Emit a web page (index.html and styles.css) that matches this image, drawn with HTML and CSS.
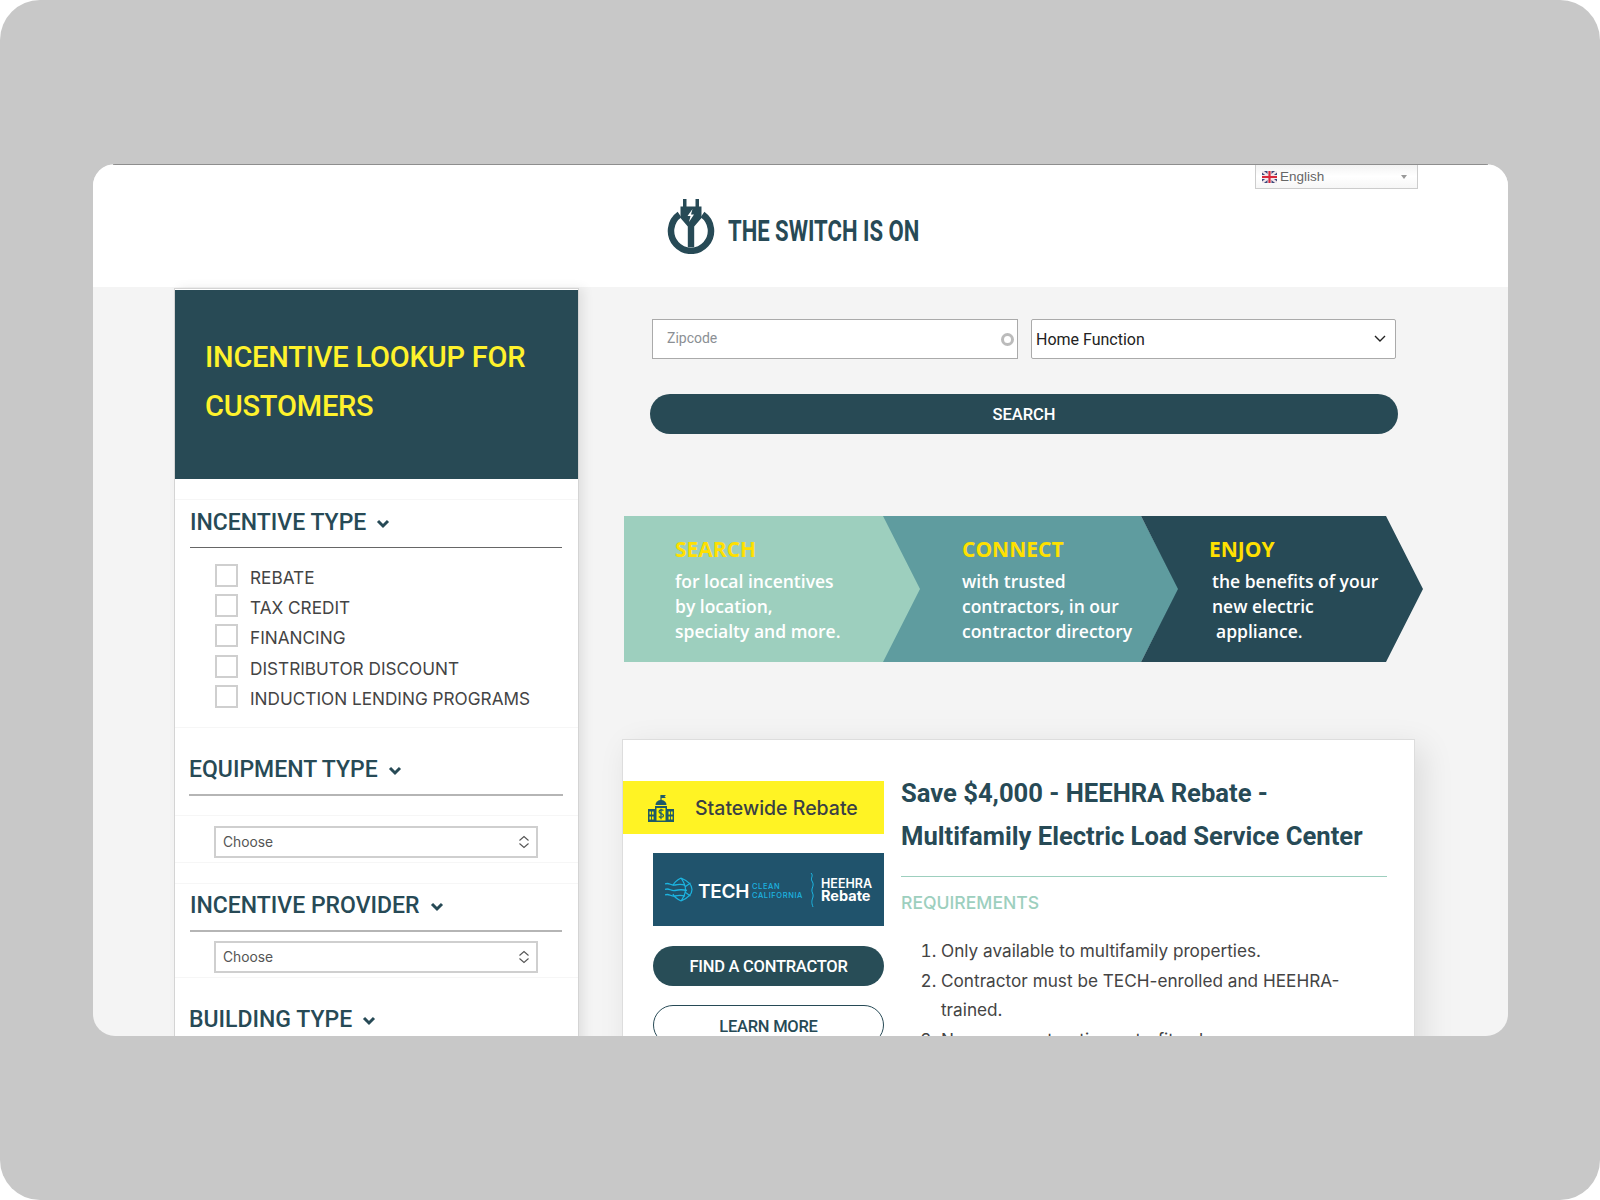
FILE: index.html
```html
<!DOCTYPE html>
<html lang="en">
<head>
<meta charset="utf-8">
<title>The Switch Is On</title>
<link rel="stylesheet" href="styles.css">
</head>
<body>
<div class="stage">
  <div class="window">
    <div class="topline"></div>
    <header class="header">
      <div class="logo">
        <svg class="logo-icon" width="48" height="56" viewBox="0 0 48 56">
          <path d="M12.5 16.5 A20 20 0 1 0 35.5 16.5" fill="none" stroke="#274a56" stroke-width="6.5"/>
          <path d="M16 1h3.5v8H16zM28.5 1H32v8h-3.5zM13.500 8.500h21V20l-7.300 8.500V49h-6.400V28.500L13.500 20z" fill="#274a56"/>
          <path d="M25.500 11l-5 7h3l-1.500 6 5-7.500h-3z" fill="#fff"/>
        </svg>
        <span class="logo-text">THE SWITCH IS ON</span>
      </div>
      <div class="lang">
        <svg class="flag" width="15" height="12" viewBox="0 0 15 12">
          <rect width="15" height="12" rx="2" fill="#3d4a7c"/>
          <path d="M0 0l15 12M15 0L0 12" stroke="#f2e6ea" stroke-width="2.400"/>
          <path d="M7.500 0v12M0 6h15" stroke="#f2e6ea" stroke-width="4"/>
          <path d="M7.500 0v12M0 6h15" stroke="#d8283c" stroke-width="2.200"/>
        </svg>
        <span class="lang-name">English</span>
        <span class="lang-caret"></span>
      </div>
    </header>
    <main class="main">
      <aside class="sidebar">
        <div class="panel"><h1 class="panel-title">INCENTIVE LOOKUP FOR CUSTOMERS</h1></div>

        <section class="group group-first">
          <h2 class="group-title">INCENTIVE TYPE
            <svg class="chev" width="14" height="10" viewBox="0 0 14 10"><path d="M2 2l5 5 5-5" fill="none" stroke="#274a56" stroke-width="3"/></svg>
          </h2>
          <div class="rule rule-dark"></div>
          <ul class="checks">
            <li class="check"><span class="box"></span>REBATE</li>
            <li class="check"><span class="box"></span>TAX CREDIT</li>
            <li class="check"><span class="box"></span>FINANCING</li>
            <li class="check"><span class="box"></span>DISTRIBUTOR DISCOUNT</li>
            <li class="check"><span class="box"></span>INDUCTION LENDING PROGRAMS</li>
          </ul>
        </section>

        <section class="group group-equip">
          <h2 class="group-title shift">EQUIPMENT TYPE
            <svg class="chev" width="14" height="10" viewBox="0 0 14 10"><path d="M2 2l5 5 5-5" fill="none" stroke="#274a56" stroke-width="3"/></svg>
          </h2>
          <div class="rule rule-wide"></div>
        </section>
        <section class="group group-select">
          <div class="choose"><span>Choose</span>
            <svg width="12" height="16" viewBox="0 0 12 16"><path d="M1.500 6.500L6 2.500l4.500 4M1.500 9.500L6 13.500l4.500-4" fill="none" stroke="#555" stroke-width="1.100"/></svg>
          </div>
        </section>

        <section class="group group-provider">
          <h2 class="group-title">INCENTIVE PROVIDER
            <svg class="chev" width="14" height="10" viewBox="0 0 14 10"><path d="M2 2l5 5 5-5" fill="none" stroke="#274a56" stroke-width="3"/></svg>
          </h2>
          <div class="rule rule-mid"></div>
          <div class="choose choose-tight"><span>Choose</span>
            <svg width="12" height="16" viewBox="0 0 12 16"><path d="M1.500 6.500L6 2.500l4.500 4M1.500 9.500L6 13.500l4.500-4" fill="none" stroke="#555" stroke-width="1.100"/></svg>
          </div>
        </section>

        <section class="group group-building">
          <h2 class="group-title shift">BUILDING TYPE
            <svg class="chev" width="14" height="10" viewBox="0 0 14 10"><path d="M2 2l5 5 5-5" fill="none" stroke="#274a56" stroke-width="3"/></svg>
          </h2>
        </section>
      </aside>

      <div class="content">
        <div class="search-row">
          <div class="zip"><span class="zip-text">Zipcode</span><span class="zip-ring"></span></div>
          <div class="func"><span>Home Function</span>
            <svg width="14" height="10" viewBox="0 0 14 10"><path d="M2 2l5 5 5-5" fill="none" stroke="#222" stroke-width="1.400"/></svg>
          </div>
        </div>
        <div class="search-btn">SEARCH</div>

        <div class="steps">
          <div class="step step-1">
            <div class="step-head">SEARCH</div>
            <div class="step-line">for local incentives</div>
            <div class="step-line">by location,</div>
            <div class="step-line">specialty and more.</div>
          </div>
          <div class="step step-2">
            <div class="step-head">CONNECT</div>
            <div class="step-line">with trusted</div>
            <div class="step-line">contractors, in our</div>
            <div class="step-line">contractor directory</div>
          </div>
          <div class="step step-3">
            <div class="step-head">ENJOY</div>
            <div class="step-line nudge">the benefits of your</div>
            <div class="step-line nudge">new electric</div>
            <div class="step-line nudge-more">appliance.</div>
          </div>
        </div>

        <article class="card">
          <div class="card-left">
            <div class="tag">
              <svg class="tag-icon" width="26" height="28" viewBox="0 0 26 28">
                <path d="M13 1v6" stroke="#1f5a68" stroke-width="1.200"/>
                <path d="M13 1h5l-1.500 1.500L18 4h-5z" fill="#1f5a68"/>
                <path d="M7.500 11a5.500 5 0 0 1 11 0z" fill="#1f5a68"/>
                <path d="M0 15h7v13H0zM19 15h7v13h-7zM7 12h12v16H7z" fill="#1f5a68"/>
                <path d="M1.500 17.500h1.600v3H1.500zM4 17.500h1.600v3H4zM1.500 22.500h1.600v3H1.500zM4 22.500h1.600v3H4zM20.500 17.500h1.600v3h-1.600zM23 17.500h1.600v3H23zM20.500 22.500h1.600v3h-1.600zM23 22.500h1.600v3H23z" fill="#fff200"/>
                <path d="M8.500 14h9v12.500h-9z" fill="#fff200"/>
                <path d="M15.500 16.500c-1-1-4.500-1-4.500 1.200 0 2.600 4.500 1.300 4.500 3.800 0 2.200-3.500 2.200-4.700 1M13 14.800v10.400" fill="none" stroke="#1f5a68" stroke-width="1.200"/>
              </svg>
              <span class="tag-text">Statewide Rebate</span>
            </div>
            <div class="tech">
              <svg class="leaf" width="28" height="25" viewBox="0 0 28 25">
                <path d="M16 1C23 4 27 8 27 12.500S23 21 16 24M16 1C12 3 9 5.500 8 8.500M16 24C12 22 9 20 8 17M16 1C19.500 6 20.500 9 20.500 12.500S19.500 19 16 24M20.500 9.500l5-3.500M20.500 15.500l5 3.500" fill="none" stroke="#1cb4e0" stroke-width="1.200"/>
                <path d="M0 7c4-2 6 2 10 1s6-1 10 0M0 12.500c4-2 6 2 10 1s8-1 12 0M0 18c4-2 6 2 10 1s6-1 10 0" fill="none" stroke="#1cb4e0" stroke-width="1.300"/>
              </svg>
              <span class="tech-name">TECH</span>
              <span class="tech-sub"><span class="tech-sub-line">CLEAN</span><span class="tech-sub-line">CALIFORNIA</span></span>
              <svg class="wave" width="4" height="34" viewBox="0 0 4 34"><path d="M1 0c3 3-1 5 1 8s1 5 0 8 2 5 1 8-2 5 0 10" fill="none" stroke="#1cb4e0" stroke-width="1"/></svg>
              <span class="heehra"><span class="heehra-top">HEEHRA</span><span class="heehra-bot">Rebate</span></span>
            </div>
            <div class="pill pill-dark">FIND A CONTRACTOR</div>
            <div class="pill pill-light">LEARN MORE</div>
          </div>
          <div class="card-right">
            <h3 class="card-title">Save $4,000 - HEEHRA Rebate - Multifamily Electric Load Service Center</h3>
            <div class="card-rule"></div>
            <h4 class="req">REQUIREMENTS</h4>
            <ol class="req-list">
              <li>Only available to multifamily properties.</li>
              <li>Contractor must be TECH-enrolled and HEEHRA-trained.</li>
              <li>No new construction, retrofit only.</li>
            </ol>
          </div>
        </article>
      </div>
    </main>
  </div>
</div>
</body>
</html>
```
FILE: styles.css
```css
* { box-sizing: border-box; }
html, body { margin: 0; padding: 0; background: #fff; }
h1, h2, h3, h4, ul, ol { margin: 0; padding: 0; }

.stage {
  width: 1600px;
  height: 1200px;
  background: #c8c8c8;
  border-radius: 40px;
  padding: 164px 92px 164px 93px;
}
.window {
  width: 1415px;
  height: 872px;
  background: #f4f4f4;
  border-radius: 22px;
  overflow: hidden;
  display: flex;
  flex-direction: column;
}
.topline { height: 1px; background: #8e8e8e; margin: 0 20px; flex: none; }

.header {
  height: 122px;
  flex: none;
  background: #fff;
  display: flex;
  align-items: flex-start;
  padding-left: 574px;
  padding-right: 90px;
}
.logo { display: flex; align-items: center; margin-top: 33px; }
.logo-icon { display: block; }
.logo-text {
  display: inline-block;
  font-family: "Roboto", sans-serif;
  font-weight: 700;
  font-size: 30px;
  color: #274a56;
  margin-left: 13px;
  margin-top: 9px;
  transform: scaleX(.735);
  transform-origin: left center;
}
.lang {
  margin-left: auto;
  width: 163px;
  height: 24px;
  border: 1px solid #ccc;
  border-top: none;
  background: linear-gradient(#f3f3f3, #fff 50%, #f6f6f6);
  display: flex;
  align-items: center;
  padding: 0 0 0 6px;
}
.flag { flex: none; }
.lang-name {
  font-family: "Liberation Sans", sans-serif;
  font-size: 13.500px;
  color: #666;
  margin-left: 3px;
}
.lang-caret {
  margin-left: auto;
  margin-right: 10px;
  width: 0;
  height: 0;
  border-left: 3.500px solid transparent;
  border-right: 3.500px solid transparent;
  border-top: 4px solid #999;
}

.main { flex: 1; display: flex; align-items: flex-start; padding-left: 81px; min-height: 0; }

.sidebar {
  width: 405px;
  flex: none;
  margin-top: 1px;
  background: #fff;
  border: 1px solid #d4d4d4;
  box-shadow: 5px 0 10px rgba(0,0,0,.08);
  height: 800px;
}
.panel {
  height: 189px;
  margin-top: 1px;
  background: #284a55;
  padding: 43px 30px 0;
}
.panel-title {
  font-family: "Roboto", sans-serif;
  font-weight: 500;
  font-size: 29px;
  line-height: 49px;
  color: #fff22c;
  letter-spacing: -0.2px;
}

.group { border-top: 1px solid #f6f6f6; padding-left: 15px; padding-right: 16px; }
.group-first { margin-top: 20px; padding-top: 8px; padding-bottom: 19px; }
.group-equip { padding-top: 27px; padding-bottom: 19px; }
.group-select { padding-top: 10px; padding-bottom: 4px; border-bottom: 1px solid #f6f6f6; }
.group-provider { margin-top: 20px; padding-top: 7px; padding-bottom: 4px; border-bottom: 1px solid #f6f6f6; }
.group-building { border-top: none; padding-top: 27px; }

.group-title {
  font-family: "Roboto", sans-serif;
  font-weight: 500;
  font-size: 23px;
  line-height: 30px;
  color: #274a56;
  display: flex;
  align-items: center;
  gap: 10px;
}
.shift { margin-left: -1px; }
.chev { flex: none; margin-top: 2px; }

.rule { height: 1px; background: #666; margin-top: 9px; }
.rule-wide { height: 2px; background: #b5b5b5; margin: 9px -1px 0; }
.rule-mid { height: 2px; background: #b5b5b5; margin-top: 9px; }

.checks { list-style: none; margin-top: 16px; padding-left: 25px; }
.check {
  height: 30.200px;
  display: flex;
  align-items: flex-start;
  font-family: "Inter", sans-serif;
  font-size: 17.200px;
  line-height: 28px;
  color: #444;
}
.check:last-child { height: 23px; }
.box {
  width: 23px;
  height: 23px;
  flex: none;
  background: #fff;
  border: 2px solid #cfcfcf;
  margin-right: 12px;
}

.choose {
  width: 324px;
  height: 32px;
  margin-left: 24px;
  border: 2px solid #cfcfcf;
  background: #fff;
  display: flex;
  align-items: center;
  justify-content: space-between;
  padding: 0 6px 0 7px;
  font-family: "Inter", sans-serif;
  font-size: 13.800px;
  color: #555;
}
.choose-tight { margin-top: 9px; }

.content { flex: 1; display: flex; flex-direction: column; min-width: 0; }
.search-row { display: flex; gap: 13px; margin: 32px 0 0 73px; }
.zip, .func {
  height: 40px;
  border: 1px solid #aaa;
  background: #fff;
  display: flex;
  align-items: center;
  justify-content: space-between;
}
.zip { width: 366px; padding: 0 3px 0 14px; }
.func { width: 365px; padding: 0 8px 0 4px; border-radius: 2px; }
.zip-text {
  font-family: "Roboto", sans-serif;
  font-size: 14px;
  color: #8b8f94;
  margin-top: -3px;
}
.zip-ring { width: 13px; height: 13px; border: 3px solid #bbb; border-radius: 50%; }
.func span { font-family: "Roboto", sans-serif; font-size: 16px; color: #222; }

.search-btn {
  width: 748px;
  height: 40px;
  margin: 35px 0 0 71px;
  border-radius: 20px;
  background: #284a55;
  color: #fff;
  font-family: "Roboto", sans-serif;
  font-weight: 500;
  font-size: 16.500px;
  line-height: 41px;
  text-align: center;
}

.steps { display: flex; margin: 82px 0 0 45px; height: 146px; flex: none; }
.step { flex: none; height: 146px; font-family: "Open Sans", sans-serif; color: #fff; }
.step-1 {
  width: 297px;
  background: #9dcfbe;
  clip-path: polygon(0 0, 260px 0, 100% 50%, 260px 100%, 0 100%);
  padding: 19px 0 0 51px;
}
.step-2 {
  width: 296px;
  margin-left: -38px;
  background: #5f9c9f;
  clip-path: polygon(0 0, 258px 0, 100% 50%, 258px 100%, 0 100%, 37px 50%);
  padding: 19px 0 0 79px;
}
.step-3 {
  width: 282px;
  margin-left: -38px;
  background: #274a56;
  clip-path: polygon(0 0, 245px 0, 100% 50%, 245px 100%, 0 100%, 37px 50%);
  padding: 19px 0 0 68px;
}
.step-head { font-size: 21px; line-height: 28px; font-weight: 700; color: #ffe000; margin-bottom: 6px; }
.step-line { font-size: 17.500px; line-height: 25px; font-weight: 600; }
.nudge { margin-left: 3px; }
.nudge-more { margin-left: 7px; }

.card {
  width: 793px;
  height: 700px;
  margin: 77px 0 0 43px;
  background: #fff;
  border: 1px solid #ddd;
  box-shadow: 8px 8px 30px rgba(0,0,0,.1);
  display: flex;
  flex: none;
}
.card-left { width: 261px; flex: none; padding-top: 41px; }
.tag {
  height: 53px;
  background: #fff324;
  display: flex;
  align-items: center;
  padding-left: 25px;
}
.tag-text {
  font-family: "Inter", sans-serif;
  font-weight: 500;
  font-size: 19.500px;
  color: #3a3f45;
  margin-left: 21px;
}
.tech {
  width: 231px;
  height: 73px;
  margin: 19px 0 0 30px;
  background: #20536c;
  display: flex;
  align-items: center;
  padding-left: 12px;
  color: #fff;
  font-family: "Inter", sans-serif;
}
.leaf { flex: none; }
.tech-name { font-weight: 600; font-size: 19px; margin: 3px 0 0 5px; letter-spacing: -0.3px; }
.tech-sub { display: flex; flex-direction: column; margin: 2px 0 0 3px; color: #1cb4e0; font-size: 7.500px; line-height: 9px; letter-spacing: 0.6px; font-weight: 500; }
.tech-sub-line { display: block; }
.wave { flex: none; margin-left: 7px; }
.heehra { display: flex; flex-direction: column; margin-left: 7px; font-weight: 700; }
.heehra-top { font-size: 12.500px; line-height: 12px; font-weight: 600; }
.heehra-bot { font-size: 14.500px; line-height: 12px; }
.pill {
  width: 231px;
  height: 40px;
  margin: 20px 0 0 30px;
  border-radius: 20px;
  font-family: "Roboto", sans-serif;
  font-weight: 500;
  font-size: 16.500px;
  letter-spacing: -0.25px;
  line-height: 41px;
  text-align: center;
}
.pill-dark { background: #284d57; color: #fff; }
.pill-light { background: #fff; color: #274a56; border: 1px solid #274a56; margin-top: 19px; }

.card-right { width: 486px; margin-left: 17px; padding-top: 32px; }
.card-title {
  font-family: "Roboto", sans-serif;
  font-weight: 700;
  font-size: 25.600px;
  line-height: 43px;
  color: #274a56;
}
.card-rule { height: 1px; background: #9dcfbe; margin-top: 18px; }
.req {
  font-family: "Inter", sans-serif;
  font-weight: 500;
  font-size: 17.600px;
  line-height: 22px;
  color: #9dcfbe;
  margin-top: 15px;
}
.req-list {
  margin-top: 22px;
  padding-left: 40px;
  font-family: "Inter", sans-serif;
  font-size: 17.200px;
  line-height: 29.700px;
  color: #444;
}
```
